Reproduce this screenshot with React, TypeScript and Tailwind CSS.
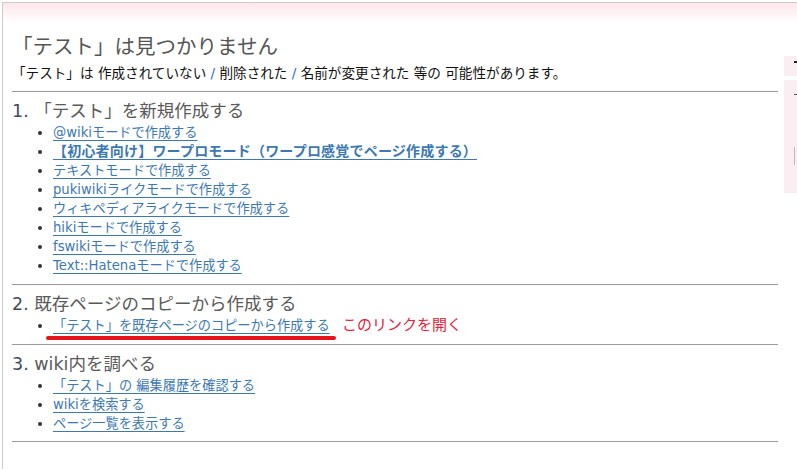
import React from 'react';

const font = { fontFamily: '"DejaVu Sans", "Noto Sans CJK JP", sans-serif' };

const section1 = [
  { label: '@wikiモードで作成する' },
  { label: '【初心者向け】ワープロモード（ワープロ感覚でページ作成する）', bold: true },
  { label: 'テキストモードで作成する' },
  { label: 'pukiwikiライクモードで作成する' },
  { label: 'ウィキペディアライクモードで作成する' },
  { label: 'hikiモードで作成する' },
  { label: 'fswikiモードで作成する' },
  { label: 'Text::Hatenaモードで作成する' },
];

const section3 = ['「テスト」の 編集履歴を確認する', 'wikiを検索する', 'ページ一覧を表示する'];

const Link = ({ children, bold }: { children: React.ReactNode; bold?: boolean }) => (
  <a
    href="#"
    className={`text-[#3b78b4] underline underline-offset-[3px] decoration-1 ${bold ? 'text-[14px] font-bold tracking-[0.2px]' : ''}`}
  >
    {children}
  </a>
);

const Heading = ({ num, children }: { num: string; children: React.ReactNode }) => (
  <h2 className="mt-[7px] text-[17.5px] leading-[24px] text-[#5a5a5a]">
    <span className="text-[#3f4b5b]">{num}</span> {children}
  </h2>
);

const Rule = () => <div className="mt-[9px] h-px bg-[#9a9a9a]" />;

export default function App() {
  return (
    <div className="min-h-[471px] bg-white" style={font}>
      <div className="ml-[2px] mt-[2px] min-h-[467px] border-l border-t border-[#cccccc]">
        <div className="h-[20px] bg-gradient-to-b from-[#fde6ec] to-white" />
        <div className="flex">
          <main className="ml-[9px] w-[767px]">
            <h1 className="mt-[9px] text-[20.5px] leading-[30px] text-[#555555]">「テスト」は見つかりません</h1>
            <p className="mt-[2px] text-[13.6px] leading-[18px] text-[#111111]">
              「テスト」は 作成されていない <span className="text-[#3366cc]">/</span> 削除された{' '}
              <span className="text-[#3366cc]">/</span> 名前が変更された 等の 可能性があります。
            </p>
            <Rule />

            <Heading num="1.">「テスト」を新規作成する</Heading>
            <ul className="list-disc pl-[41px] text-[13.2px] leading-[19px] marker:text-[#333333]">
              {section1.map((item, i) => (
                <li key={i}>
                  <Link bold={item.bold}>{item.label}</Link>
                </li>
              ))}
            </ul>
            <Rule />

            <Heading num="2.">既存ページのコピーから作成する</Heading>
            <ul className="list-disc pl-[41px] text-[13.2px] leading-[19px] marker:text-[#333333]">
              <li className="relative">
                <Link>「テスト」を既存ページのコピーから作成する</Link>
                <span className="absolute left-[-7px] top-[20px] h-[4px] w-[290px] rounded-full bg-[#e8141c]" />
                <span className="absolute left-[289px] top-[-2px] text-[15px] leading-[22px] text-[#e8203a]">
                  このリンクを開く
                </span>
              </li>
            </ul>
            <Rule />

            <Heading num="3.">wiki内を調べる</Heading>
            <ul className="list-disc pl-[41px] text-[13.2px] leading-[19px] marker:text-[#333333]">
              {section3.map((label, i) => (
                <li key={i}>
                  <Link>{label}</Link>
                </li>
              ))}
            </ul>
            <div className="mt-[8px] h-px bg-[#9a9a9a]" />
          </main>
          <aside className="ml-[6px] flex-1 pt-[33px]">
            <div className="flex h-[20px] items-start bg-[#fbeef2] pl-[10px] pt-[5px]">
              <span className="block h-[2px] w-[3px] bg-[#222222]" />
            </div>
            <div className="mt-[4px] h-[113px] bg-[#fbeef2] pl-[10px] pt-[14px]">
              <span className="block h-px w-[3px] bg-[#555555]" />
              <span className="mt-[52px] block h-[18px] w-px bg-[#bbbbbb]" />
            </div>
          </aside>
        </div>
      </div>
    </div>
  );
}
